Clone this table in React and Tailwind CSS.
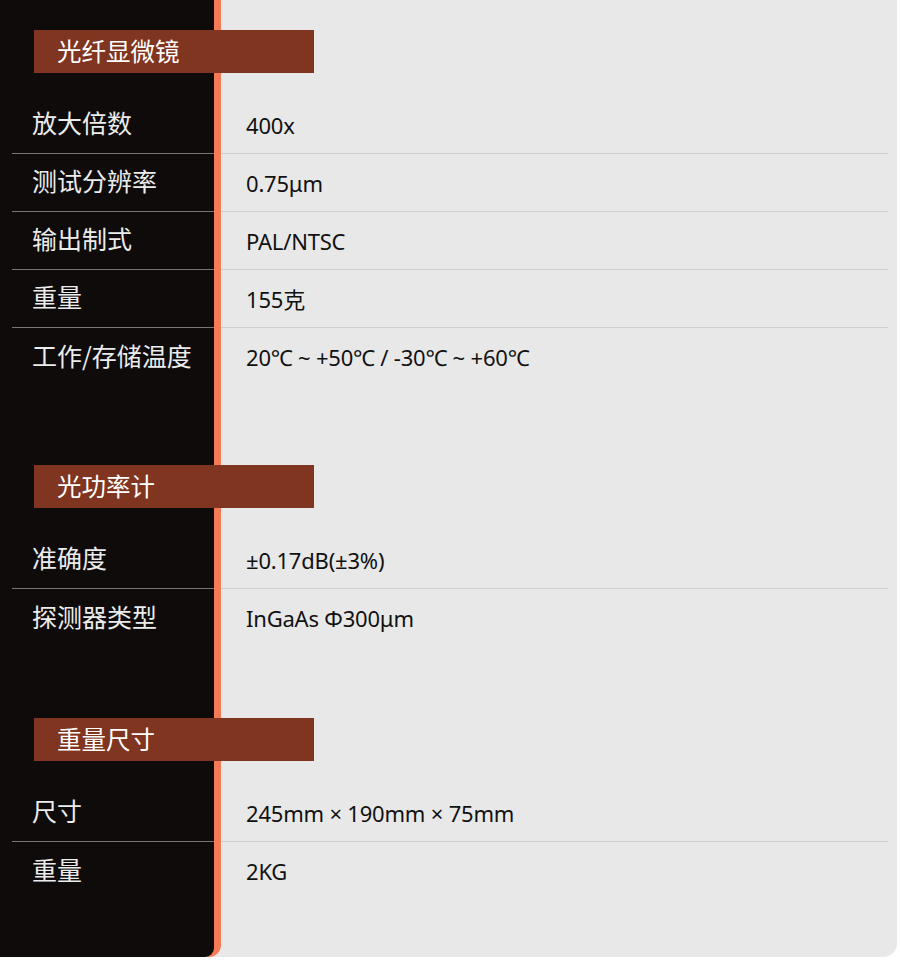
import React from "react";

function Header({ title }) {
  return (
    <div className="flex h-[43px]">
      <div className="w-[214px] shrink-0 bg-[#0e0b0a]">
        <div className="relative z-10 ml-[34px] flex h-full w-[280px] items-center bg-[#7f3520] pl-[23px] text-[24.5px] leading-none text-white">
          {title}
        </div>
      </div>
      <div className="w-[7px] shrink-0 bg-[#f47b56]" />
      <div className="flex-1" />
    </div>
  );
}

function Spacer({ h }) {
  return (
    <div className={`flex ${h}`}>
      <div className="w-[214px] shrink-0 bg-[#0e0b0a]" />
      <div className="w-[7px] shrink-0 bg-[#f47b56]" />
      <div className="flex-1" />
    </div>
  );
}

function Row({ label, value, last }) {
  return (
    <div className="flex h-[58px]">
      <div className="w-[214px] shrink-0 bg-[#0e0b0a] pl-[12px]">
        <div
          className={`flex h-full items-center pl-[20px] pb-[4px] text-[25px] leading-none text-[#ececec] ${
            last ? "" : "border-b border-[#767676]"
          }`}
        >
          {label}
        </div>
      </div>
      <div className="w-[7px] shrink-0 bg-[#f47b56]" />
      <div className="flex-1 pr-[9px]">
        <div
          className={`flex h-full items-center pl-[25px] font-['Noto_Sans','Noto_Sans_CJK_SC',sans-serif] text-[22px] leading-none tracking-[-0.2px] text-[#111111] ${
            last ? "" : "border-b border-[#d0d0d0]"
          }`}
        >
          {value}
        </div>
      </div>
    </div>
  );
}

export default function App() {
  return (
    <div className="min-h-[969px] bg-white font-['Noto_Sans_CJK_SC','Noto_Sans',sans-serif]">
      <div className="w-[897px] overflow-hidden rounded-br-[14px] bg-[#e8e8e8]">
        <Spacer h="h-[30px]" />
        <Header title="光纤显微镜" />
        <Spacer h="h-[23px]" />
        <Row label="放大倍数" value="400x" />
        <Row label="测试分辨率" value="0.75μm" />
        <Row label="输出制式" value="PAL/NTSC" />
        <Row label="重量" value="155克" />
        <Row label="工作/存储温度" value="20℃ ~ +50℃ / -30℃ ~ +60℃" last />
        <Spacer h="h-[79px]" />
        <Header title="光功率计" />
        <Spacer h="h-[23px]" />
        <Row label="准确度" value="±0.17dB(±3%)" />
        <Row label="探测器类型" value="InGaAs Φ300μm" last />
        <Spacer h="h-[71px]" />
        <Header title="重量尺寸" />
        <Spacer h="h-[23px]" />
        <Row label="尺寸" value="245mm × 190mm × 75mm" />
        <Row label="重量" value="2KG" last />
        <div className="flex h-[57px]">
          <div className="w-[221px] shrink-0 rounded-br-[12px] bg-[#f47b56]">
            <div className="h-full w-[214px] rounded-br-[9px] bg-[#0e0b0a]" />
          </div>
          <div className="flex-1" />
        </div>
      </div>
    </div>
  );
}
